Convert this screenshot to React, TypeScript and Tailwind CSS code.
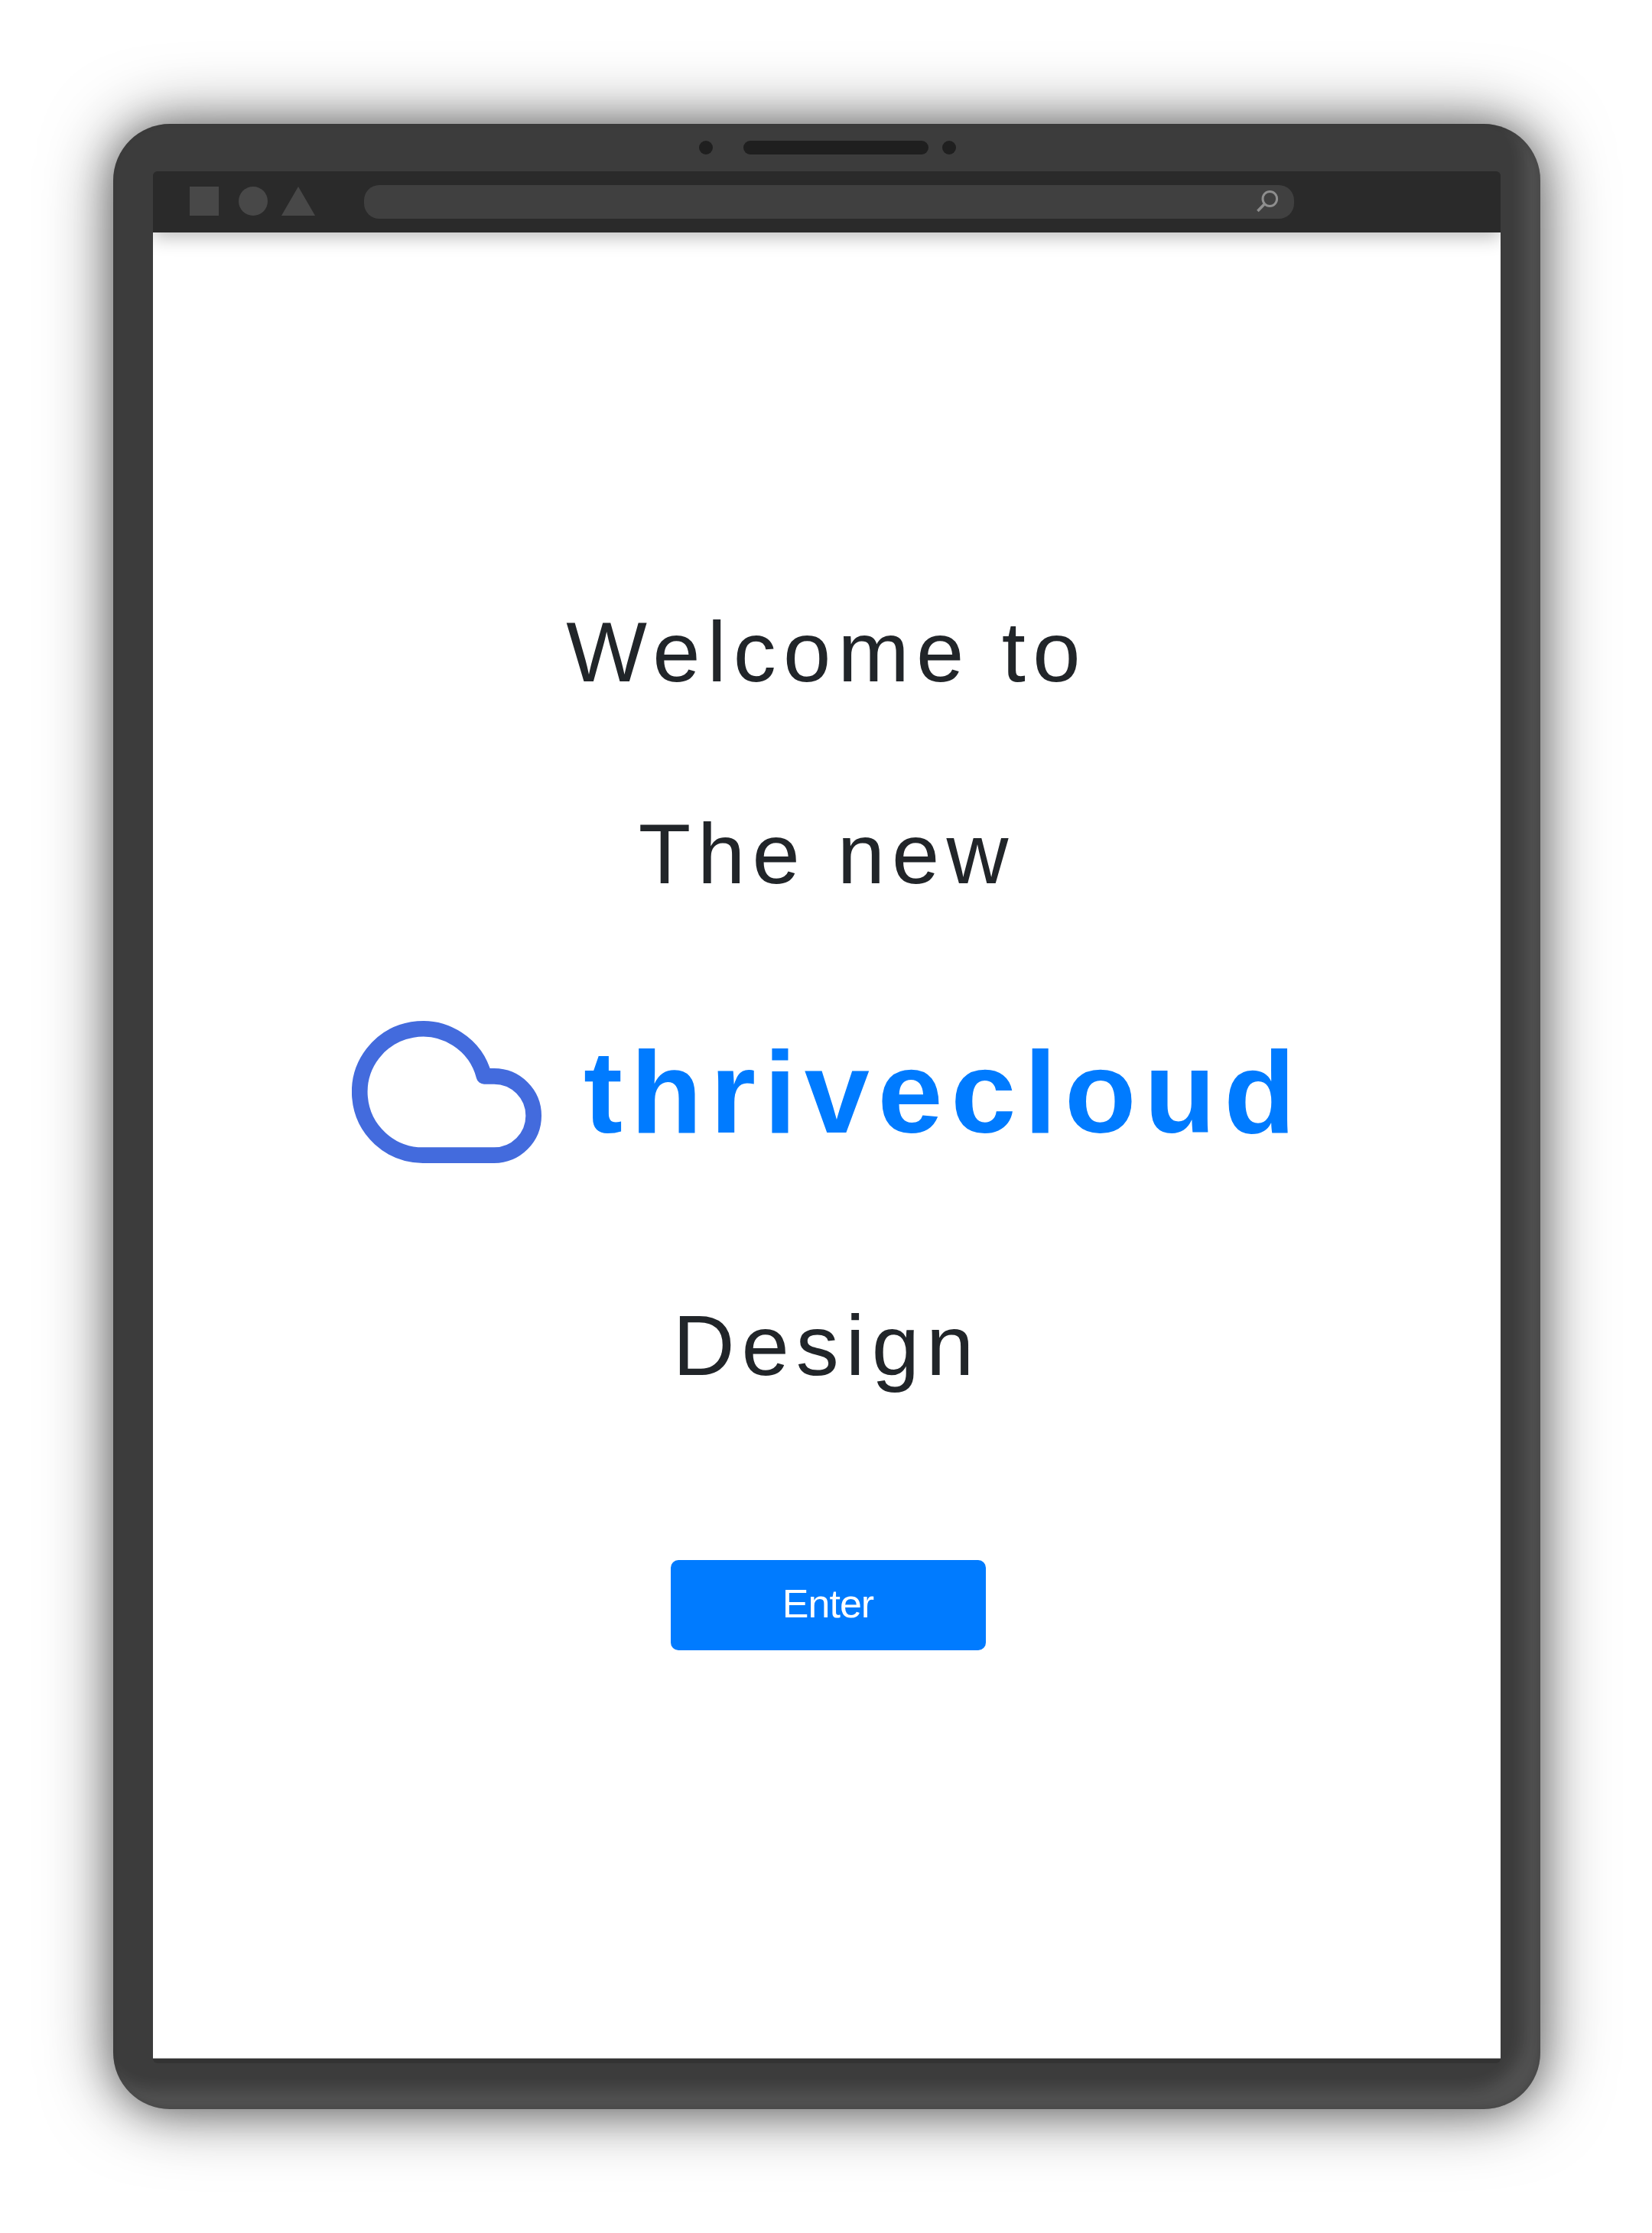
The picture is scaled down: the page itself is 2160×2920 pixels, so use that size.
function Camera() {
  return <span className="size-[18px] rounded-full bg-[#1f1f1f]" />;
}

function Bezel() {
  return (
    <div className="flex h-[62px] items-center pl-[714px]">
      <Camera />
      <span className="ml-10 mr-[18px] h-[18px] w-[242px] rounded-[9px] bg-[#1f1f1f]" />
      <Camera />
    </div>
  );
}

function SearchIcon() {
  return (
    <svg className="h-8 w-8" viewBox="0 0 32 32" fill="none" stroke="#8e8e8e">
      <ellipse cx="20.3" cy="12" rx="9.3" ry="9.5" strokeWidth="3" />
      <path d="M13.4 18.8 4.4 28" strokeWidth="3.6" />
    </svg>
  );
}

function BrowserBar() {
  return (
    <header className="relative z-10 flex h-20 items-center rounded-t-[6px] bg-[#2a2a2a] pl-12 shadow-[0_6px_24px_rgba(0,0,0,0.27)]">
      <span className="mt-[-2px] size-[38px] bg-[#484848]" />
      <span className="ml-[26px] mt-[-2px] size-[38px] rounded-full bg-[#484848]" />
      <svg className="ml-[18px] mt-[-2px] h-[38px] w-11" viewBox="0 0 44 38" fill="#484848">
        <path d="M22 0 44 38H0Z" />
      </svg>
      <div className="ml-16 flex h-11 w-[1216px] items-center justify-end rounded-[20px] bg-[#404040] pr-5">
        <SearchIcon />
      </div>
    </header>
  );
}

function Logo() {
  return (
    <div className="mt-[152px] flex h-[186px] items-center gap-[55px] self-start pl-[260px]">
      <svg
        className="size-[248px]"
        viewBox="0 0 24 24"
        fill="none"
        stroke="#436bdd"
        strokeWidth="2"
        strokeLinecap="round"
        strokeLinejoin="round"
      >
        <path d="M18 10h-1.26A8 8 0 1 0 9 20h9a5 5 0 0 0 0-10z" />
      </svg>
      <span className="text-[153px] leading-[184px] font-bold tracking-[10.6px] text-[#007bff]">thrivecloud</span>
    </div>
  );
}

export default function App() {
  return (
    <div className="h-[2920px] w-[2160px] overflow-hidden bg-white pt-[162px] pl-[148px] font-['Liberation_Sans',Arial,sans-serif] text-[#212529]">
      <div className="h-[2596px] w-[1866px] rounded-[74px] bg-[#3c3c3c] px-[52px] shadow-[0_0_90px_rgba(0,0,0,0.55),0_3px_50px_rgba(0,0,0,0.3),inset_-3px_-2px_8px_rgba(0,0,0,0.12),inset_-22px_-26px_20px_rgba(255,255,255,0.11)]">
        <Bezel />
        <div className="h-[2474px] overflow-hidden rounded-[6px] bg-[#333333]">
          <BrowserBar />
          <main className="flex h-[2388px] flex-col items-center border-b border-[#b8b8b8] bg-white pt-[483px]">
            <h1 className="text-[112px] leading-[132px] tracking-[9.2px]">Welcome to</h1>
            <h1 className="mt-[132px] text-[112px] leading-[132px] tracking-[9px]">The new</h1>
            <Logo />
            <h1 className="mt-[173px] text-[112px] leading-[132px] tracking-[9px]">Design</h1>
            <button className="mt-[214px] ml-[3px] h-[118px] w-[412px] rounded-[10px] bg-[#007bff] pb-1 text-[52px] tracking-[-1px] text-white">
              Enter
            </button>
          </main>
        </div>
      </div>
    </div>
  );
}
